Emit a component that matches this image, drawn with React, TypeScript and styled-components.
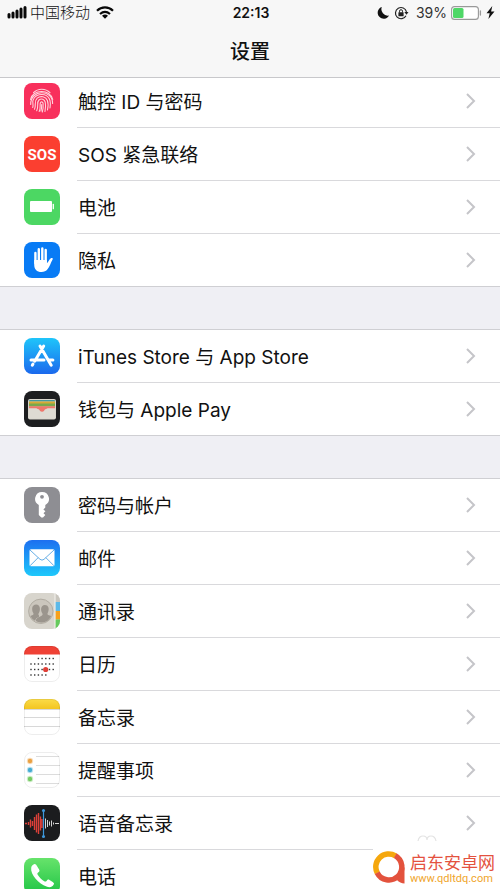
import React from "react";
import styled, { createGlobalStyle } from "styled-components";

const GlobalStyle = createGlobalStyle`
  * { box-sizing: border-box; }
  body { margin: 0; background: #efeff4; }
`;

const Screen = styled.div`
  position: relative;
  display: flex;
  flex-direction: column;
  height: 100vh;
  overflow: hidden;
  background: #efeff4;
  color: #111;
  font-family: Inter, "Noto Sans CJK SC", sans-serif;
`;

const Header = styled.header`
  position: relative;
  z-index: 1;
  flex: none;
  background: #f7f7f7;
  border-bottom: 1px solid #c8c8cb;
`;

const StatusBar = styled.div`
  display: grid;
  grid-template-columns: 1fr auto 1fr;
  align-items: center;
  height: 25px;
  padding: 0 5px 0 7px;
  font-size: 14px;
  line-height: 20px;
`;

const StatusSide = styled.div<{ $end?: boolean }>`
  display: flex;
  align-items: center;
  justify-content: ${(p) => (p.$end ? "flex-end" : "flex-start")};
  gap: ${(p) => (p.$end ? 4 : 3)}px;

  svg { flex: none; display: block; }
`;

const Carrier = styled.span`
  margin-right: 3px;
  font-size: 15px;
  font-weight: 300;
`;

const Percent = styled.span`
  margin-left: 3px;
  color: #333;
`;

const Time = styled.time`
  font-size: 14px;
  font-weight: 600;
`;

const Title = styled.h1`
  margin: 0;
  height: 52px;
  font-size: 20px;
  line-height: 54px;
  font-weight: 500;
  text-align: center;
`;

const Content = styled.main`
  flex: 1;
  min-height: 0;
  margin-top: -4px;
  overflow: hidden;
`;

const Group = styled.ul`
  margin: 0 0 42px;
  padding: 0;
  list-style: none;
  background: #fff;
  border-top: 1px solid #cfcfd3;
`;

const Row = styled.a`
  display: flex;
  height: 53px;
  padding-left: 24px;
  color: inherit;
  text-decoration: none;
`;

const Item = styled.li`
  &:last-child ${Row} { border-bottom: 1px solid #cfcfd3; }
`;

const IconBox = styled.span`
  flex: none;
  width: 36px;
  margin: 8px 17px 0 0;

  svg { display: block; }
`;

const RowBody = styled.span`
  flex: 1;
  display: flex;
  align-items: center;
  justify-content: space-between;
  padding: 0 24px 0 1px;
  border-bottom: 1px solid #d9d9dc;

  ${Item}:last-child & { border-bottom: 0; }
`;

const Label = styled.span`
  padding-top: 4px;
  font-size: 19px;
  line-height: 28px;
`;

const Watermark = styled.aside`
  position: absolute;
  right: 0;
  bottom: 0;
  display: flex;
  align-items: flex-start;
  gap: 4px;
  height: 40px;
  padding: 2px 5px 0 0;
  background: #fff;
`;

const WatermarkText = styled.div`
  display: flex;
  flex-direction: column;
  padding-top: 2px;
`;

const SiteName = styled.span`
  color: #e4523f;
  font-size: 17px;
  line-height: 20px;
`;

const SiteUrl = styled.span`
  color: #f0a52c;
  font-family: Roboto, sans-serif;
  font-size: 11px;
  line-height: 12px;
`;

const FaintMark = styled.svg`
  position: absolute;
  right: 62px;
  bottom: 47px;
`;

type TileProps = { fill: string; outline?: boolean; name: string; children?: React.ReactNode };

const Tile = ({ fill, outline, name, children }: TileProps) => (
  <svg width="36" height="36" viewBox="0 0 36 36" aria-hidden="true">
    <defs>
      <clipPath id={`clip-${name}`}>
        <rect width="36" height="36" rx="8" />
      </clipPath>
    </defs>
    <g clipPath={`url(#clip-${name})`}>
      <rect width="36" height="36" fill={fill} />
      {children}
    </g>
    {outline && <rect x=".5" y=".5" width="35" height="35" rx="7.5" fill="none" stroke="#000" strokeOpacity=".07" />}
  </svg>
);

const Gradient = ({ id, from, to }: { id: string; from: string; to: string }) => (
  <linearGradient id={id} x1="0" y1="0" x2="0" y2="1">
    <stop offset="0" stopColor={from} />
    <stop offset="1" stopColor={to} />
  </linearGradient>
);

const TouchIdIcon = () => (
  <Tile fill="#f8305c" name="touch">
    <g fill="none" stroke="#ffd3dc" strokeWidth="1.1" strokeLinecap="round">
      <path d="M9.5 9.7C14 5 21.500 5 26 9.700" />
      <path d="M6.500 16.500C8.500 5.800 26.500 5.800 28.700 16.500" />
      <path d="M6.700 21.500C6.300 6 28.800 6 28.600 20.500" />
      <path d="M8.700 24.500C10 21 7.300 19 10 15.300C13.500 10 22.500 10.200 25.300 15.800C26.900 19 26.300 23 26 25" />
      <path d="M10.500 26.300C12.600 22 9.500 18.500 13.200 15.200C16.500 12.300 22 13.500 23.400 17.500C24.500 20.500 24 24.500 23.500 27" />
      <path d="M12.700 27.700C15 23 12.300 19.500 15 17C17.500 14.900 20.500 16.500 21.200 19C22 22.500 21.500 26 21 28.500" />
      <path d="M15.200 28.500C17 25 15.500 21.500 16.500 19.500C17.500 18.300 19 19 19.100 20.500C19.400 24 19 27 18.300 29" />
      <path d="M17.700 21.500C17.800 24 17.500 26 16.900 28" />
    </g>
  </Tile>
);

const SosIcon = () => (
  <Tile fill="#fb3f30" name="sos">
    <text
      x="18"
      y="24"
      textAnchor="middle"
      fill="#fff"
      fontFamily="Roboto, sans-serif"
      fontWeight="700"
      fontSize="15"
    >
      SOS
    </text>
  </Tile>
);

const BatteryIcon = () => (
  <Tile fill="#4cd763" name="battery">
    <rect x="6" y="12" width="22" height="11" rx="1" fill="#fff" />
    <path d="M29.300 15.500v4.200" stroke="#fff" strokeWidth="1.300" strokeLinecap="round" />
  </Tile>
);

const PrivacyIcon = () => (
  <Tile fill="#087bf5" name="privacy">
    <g fill="none" stroke="#fff" strokeWidth="2.400" strokeLinecap="round">
      <path d="M11.400 11v10M14.800 7.300v12M18.300 6.500v12M21.700 8v12" />
    </g>
    <path
      d="M10.200 18h12.700v3.200c1.700-1.100 2.400-4.200 4.300-5.100c1-.4 2 .3 1.500 1.200c-2.100 4-3 7.100-5 9.800c-1.700 2.300-3.600 3-6.200 3c-4.700 0-7.300-3-7.300-7.600z"
      fill="#fff"
    />
  </Tile>
);

const AppStoreIcon = () => (
  <Tile fill="url(#store)" name="appstore">
    <defs><Gradient id="store" from="#1fc5fa" to="#1b69ed" /></defs>
    <g fill="none" stroke="#fff" strokeWidth="3" strokeLinecap="round">
      <path d="M19.700 8l-9 15.200M16 8l11.200 19.300M7 22h13M25.200 22h3.700M9 26l-.7 1.200" />
    </g>
  </Tile>
);

const WalletIcon = () => (
  <Tile fill="#1d1e20" name="wallet">
    <rect x="4" y="8" width="28" height="20.500" rx="2" fill="#d9d6cd" />
    <path d="M5 10.500v-.5q0-1 1-1h24q1 0 1 1v.5z" fill="#4598a0" />
    <path d="M5 10.500h26v2.500H5z" fill="#d8aa35" />
    <path d="M5 12.500h26v3H5z" fill="#79a94c" />
    <path d="M5 15.300h26v3H5z" fill="#ef776b" />
    <path d="M5 17.200h7.300c2 0 2.400 3.200 5.700 3.200s3.700-3.200 5.700-3.200H31v10.300H5z" fill="#dedbd3" />
    <path d="M12.800 17q2.200.4 2.700 2t2.500 1.700t2.500-1.700t2.700-2z" fill="#ef776b" />
  </Tile>
);

const KeyIcon = () => (
  <Tile fill="#8e8e93" name="key">
    <path
      d="M18 5a6.900 6.900 0 0 0-3.200 13v10l2.500 2.500h1.700l2.300-2.400l-1.800-1.800l1.900-2l-2-1.900l1.900-2V18A6.900 6.900 0 0 0 18 5z"
      fill="#fff"
    />
    <circle cx="18" cy="9.800" r="1.900" fill="#8e8e93" />
  </Tile>
);

const MailIcon = () => (
  <Tile fill="url(#mail)" name="mail">
    <defs><Gradient id="mail" from="#1d6ff0" to="#1ec8fb" /></defs>
    <rect x="5.500" y="9.300" width="25" height="17" rx="1.500" fill="#fff" />
    <path d="M6 10l10 9.300q2 1.700 4 0L30 10M6 25.800l8.200-8.200M30 25.800l-8.200-8.200" fill="none" stroke="#55a5e2" strokeWidth=".9" />
  </Tile>
);

const ContactsIcon = () => (
  <Tile fill="#d8d5cd" name="contacts">
    <path d="M31 0h5v9h-5z" fill="#c9c6be" />
    <path d="M31 9h5v9h-5z" fill="#5cb9e8" />
    <path d="M31 18h5v8.500h-5z" fill="#f6a11c" />
    <path d="M31 26.500h5V36h-5z" fill="#65ca5d" />
    <path d="M31 0v36" stroke="#f1efe9" strokeWidth="1.200" />
    <circle cx="16.800" cy="18.300" r="12.200" fill="#cbc6bd" stroke="#aaa49b" strokeWidth=".8" />
    <g fill="#9b958d">
      <path d="M15 22.500c-1-1-.7-1.800 0-2.800c1.500-2.500 1.600-7.800-2.800-8.200c-4.600.1-4.600 5.300-3.200 8c.7 1.200.8 2-.2 2.500l-2.500 1q1.700 3.300 4.600 4.700q.8-2.700 4.100-3.900z" />
      <path d="M18 22.500c1-1 .7-1.800 0-2.800c-1.400-2.400-1.500-7.500 2.800-7.800c4.500.1 4.400 5 3.100 7.600c-.6 1.200-.6 2 .3 2.500l3 1q-3.300 7-10.400 6.500q-3-.2-5-1.500q.2-2.900 3.500-3.900z" />
    </g>
  </Tile>
);

const calendarDots: [number, number][] = [
  ...[14.4, 18.1, 21.8, 25.5, 29.2].map((x): [number, number] => [x, 12.5]),
  ...[18, 23.5].flatMap((y) => [7, 10.7, 14.4, 18.1, 21.8, 25.5, 29.2].map((x): [number, number] => [x, y])),
  ...[7, 10.7, 14.4, 18.1, 21.8].map((x): [number, number] => [x, 29]),
];

const CalendarIcon = () => (
  <Tile fill="#fff" outline name="calendar">
    {calendarDots.map(([x, y]) => (
      <rect key={`${x}-${y}`} x={x - 0.7} y={y - 0.7} width="1.400" height="1.400" fill="#333" />
    ))}
    <circle cx="21.700" cy="23.500" r="2.600" fill="#df4038" />
    <path d="M0 0h36v8.500H0z" fill="#ef4135" />
  </Tile>
);

const NotesIcon = () => (
  <Tile fill="#fff" outline name="notes">
    <defs><Gradient id="notes-top" from="#fbdc48" to="#f3c520" /></defs>
    <path d="M0 0h36v10H0z" fill="url(#notes-top)" />
    <path d="M0 10.500h36M0 18.500h36M0 27.500h36" stroke="#d8d8d8" />
  </Tile>
);

const RemindersIcon = () => (
  <Tile fill="#fff" outline name="reminders">
    <path d="M12 4.500h24M12 13.500h24M12 22.500h24M12 31.500h24" stroke="#dcdcdc" />
    {[["#eaa143", 9], ["#45acd2", 18], ["#76cb63", 27]].map(([color, y]) => (
      <g key={color} fill={color as string}>
        <circle cx="6" cy={y} r="3.200" opacity=".35" />
        <circle cx="6" cy={y} r="2.200" />
      </g>
    ))}
  </Tile>
);

const VoiceIcon = () => (
  <Tile fill="#1b1c1e" name="voice">
    <path
      d="M1 18.500h2M4.500 17v3M6.500 14.500v8M8.500 16v5M10.500 12v13M12.500 9.500v18M14.500 8v21M16.500 11.500v14M18 14v9"
      stroke="#dd4039" strokeWidth="1.400" fill="none"
    />
    <path d="M21.500 13.500v10M23.500 15v7M25.500 16.500v4M27.500 15.500v6M29.500 17.500v2M31 18.500h4" stroke="#d5d5d5" fill="none" />
    <path d="M19.500 5.500v26" stroke="#3e98dc" strokeWidth="1.200" />
    <circle cx="19.500" cy="5.500" r="1.500" fill="#3e98dc" />
    <circle cx="19.500" cy="31.500" r="1.500" fill="#3e98dc" />
  </Tile>
);

const PhoneIcon = () => (
  <Tile fill="url(#phone)" name="phone">
    <defs><Gradient id="phone" from="#67e36b" to="#20c546" /></defs>
    <path
      d="M7.200 9.700c.3-1.700 2-3.300 3.300-3.600c1-.2 1.700.8 2.300 1.700l2.300 3.600c.7 1.200.4 1.900-.7 2.800c-1.300 1-1.300 1.600-.5 2.800c1.500 2.300 3.800 4.700 6.300 6.200c1 .7 1.700.5 2.500-.5c.9-1.200 1.600-1.400 2.800-.7l3.200 2c1.300.9 1.700 1.500 1 2.600c-1.500 2.600-4 3.300-7.200 2C14.800 25.700 6.200 16.500 7.200 9.700z"
      fill="#fff"
    />
  </Tile>
);

const Chevron = () => (
  <svg width="10" height="16" viewBox="0 0 10 16" aria-hidden="true">
    <path d="M1 1l7 7l-7 7" fill="none" stroke="#c5c5c9" strokeWidth="2" />
  </svg>
);

const SignalIcon = () => (
  <svg width="20" height="13" viewBox="0 0 20 13" aria-label="信号">
    <path d="M2 8.500v2.500M6 7v4M10 5v6M14 3v8M18 1.500v9.500" stroke="#080808" strokeWidth="3" strokeLinecap="round" />
  </svg>
);

const WifiIcon = () => (
  <svg width="18" height="13" viewBox="0 0 18 13" aria-label="Wi-Fi">
    <g fill="none" stroke="#080808" strokeWidth="2.200">
      <path d="M1 4.700C5.500.3 12.500.3 17 4.700M4 8q5-4.300 10 0" />
    </g>
    <path d="M6 9.800q3-2.400 6 0L9 12.700z" fill="#080808" />
  </svg>
);

const MoonIcon = () => (
  <svg width="13" height="13" viewBox="0 0 13 13" aria-label="勿扰模式">
    <path d="M4.800 1A6 6 0 1 0 12 9.500A6.400 6.400 0 0 1 4.800 1z" fill="#111" />
  </svg>
);

const RotationLockIcon = () => (
  <svg width="15" height="14" viewBox="0 0 15 14" aria-label="方向锁定">
    <path d="M12 9.800A5.600 5.600 0 1 1 12.500 5.800" fill="none" stroke="#222" strokeWidth="1.200" />
    <path d="M10.300 6h4.200l-2 2.700z" fill="#222" />
    <rect x="4.400" y="6.200" width="5.200" height="4" rx=".5" fill="#222" />
    <path d="M5.500 6.500V5.200a1.500 1.500 0 0 1 3 0v1.300" fill="none" stroke="#222" strokeWidth="1" />
  </svg>
);

const BatteryLevelIcon = () => (
  <svg width="31" height="14" viewBox="0 0 31 14" aria-label="电池电量">
    <rect x=".6" y=".6" width="26.800" height="12.800" rx="3" fill="#fff" stroke="#999" strokeWidth="1.100" />
    <rect x="2" y="2" width="10.500" height="10" rx="1.500" fill="#4fd767" />
    <path d="M29.400 5v4" stroke="#999" strokeWidth="1.300" strokeLinecap="round" />
  </svg>
);

const BoltIcon = () => (
  <svg width="9" height="13" viewBox="0 0 9 13" aria-label="充电中">
    <path d="M6.300 0L.5 7.300h3.200L2.400 13l6.100-7.600H5.100z" fill="#111" />
  </svg>
);

const SiteLogo = () => (
  <svg width="33" height="34" viewBox="0 0 33 34" aria-hidden="true">
    <g fill="none" strokeWidth="5.500">
      <path d="M4.300 22A13 13 0 0 1 22.500 4.800" stroke="#f5a70d" />
      <path d="M22.200 4.600A13 13 0 1 1 4.200 21.700" stroke="#e3523d" />
    </g>
    <path d="M31.500 16v16.500q-4.500-.2-7.500-3.500z" fill="#e3523d" />
  </svg>
);

const groups: { label: string; Icon: React.ComponentType }[][] = [
  [
    { label: "触控 ID 与密码", Icon: TouchIdIcon },
    { label: "SOS 紧急联络", Icon: SosIcon },
    { label: "电池", Icon: BatteryIcon },
    { label: "隐私", Icon: PrivacyIcon },
  ],
  [
    { label: "iTunes Store 与 App Store", Icon: AppStoreIcon },
    { label: "钱包与 Apple Pay", Icon: WalletIcon },
  ],
  [
    { label: "密码与帐户", Icon: KeyIcon },
    { label: "邮件", Icon: MailIcon },
    { label: "通讯录", Icon: ContactsIcon },
    { label: "日历", Icon: CalendarIcon },
    { label: "备忘录", Icon: NotesIcon },
    { label: "提醒事项", Icon: RemindersIcon },
    { label: "语音备忘录", Icon: VoiceIcon },
    { label: "电话", Icon: PhoneIcon },
  ],
];

export default function App() {
  return (
    <Screen lang="zh-CN">
      <GlobalStyle />
      <Header>
        <StatusBar>
          <StatusSide>
            <SignalIcon />
            <Carrier>中国移动</Carrier>
            <WifiIcon />
          </StatusSide>
          <Time>22:13</Time>
          <StatusSide $end>
            <MoonIcon />
            <RotationLockIcon />
            <Percent>39%</Percent>
            <BatteryLevelIcon />
            <BoltIcon />
          </StatusSide>
        </StatusBar>
        <Title>设置</Title>
      </Header>
      <Content>
        {groups.map((rows) => (
          <Group key={rows[0].label}>
            {rows.map(({ label, Icon }) => (
              <Item key={label}>
                <Row href="#">
                  <IconBox><Icon /></IconBox>
                  <RowBody>
                    <Label>{label}</Label>
                    <Chevron />
                  </RowBody>
                </Row>
              </Item>
            ))}
          </Group>
        ))}
      </Content>
      <FaintMark width="22" height="7" viewBox="0 0 22 7" aria-hidden="true">
        <path d="M2 6q1-5 5-5t4 4q0-4 4-4t5 5" fill="none" stroke="#e3e3e3" strokeWidth="1.200" />
      </FaintMark>
      <Watermark>
        <SiteLogo />
        <WatermarkText>
          <SiteName>启东安卓网</SiteName>
          <SiteUrl>www.qdltdq.com</SiteUrl>
        </WatermarkText>
      </Watermark>
    </Screen>
  );
}
